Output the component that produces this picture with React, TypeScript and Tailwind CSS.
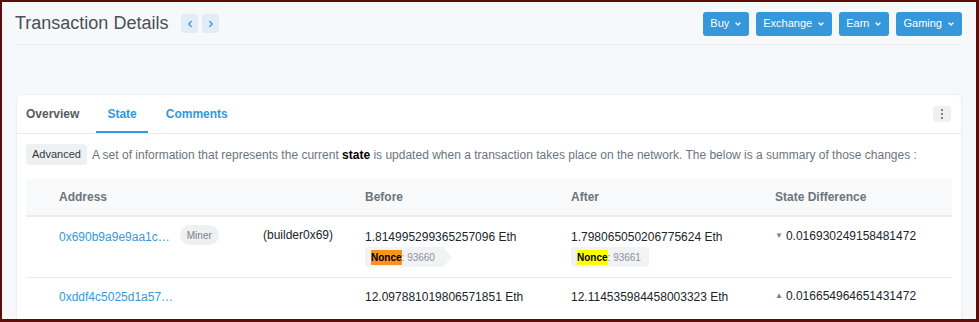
import { ChevronDown, ChevronLeft, ChevronRight } from "lucide-react";

function NavButton({ label }: { label: string }) {
  return (
    <button className="flex items-center gap-[5px] h-[24px] px-[7px] rounded-[3px] bg-[#3498db] text-white text-[11px]">
      {label}
      <ChevronDown className="w-[8px] h-[8px]" strokeWidth={4} />
    </button>
  );
}

function NonceBadge({ value, color, arrow }: { value: string; color: string; arrow?: boolean }) {
  return (
    <div className="flex mt-[1px]">
      <div className={`flex items-center h-[20px] pl-[6px] pr-[8px] bg-[#f1f3f5] text-[10px] ${arrow ? "rounded-l-[3px]" : "rounded-[4px]"}`}>
        <span className={`font-bold text-black ${color}`}>Nonce</span>
        <span className="text-[#8a9199]">: {value}</span>
      </div>
      {arrow && (
        <div className="w-0 h-0 border-y-[10px] border-y-transparent border-l-[9px] border-l-[#f1f3f5]" />
      )}
    </div>
  );
}

export default function App() {
  return (
    <div
      className="h-[322px] overflow-hidden border-[#5e0b0b] border-l-[2px] border-t-[2px] border-r-[3px] border-b-[3px] bg-[#f7f8fa]"
      style={{ fontFamily: '"Liberation Sans", Arial, sans-serif' }}
    >
      <div className="ml-[13px] mr-[14px] flex items-center justify-between h-[43px] pt-[1px] border-b border-[#e9ecef]">
        <div className="flex items-center">
          <h1 className="text-[18px] text-[#4a5057] mr-[13px]">Transaction Details</h1>
          <div className="flex gap-[4px]">
            <span className="w-[17px] h-[19px] rounded-[3px] bg-[#e1ecf8] flex items-center justify-center text-[#3498db]">
              <ChevronLeft className="w-[10px] h-[10px]" strokeWidth={3} />
            </span>
            <span className="w-[17px] h-[19px] rounded-[3px] bg-[#e1ecf8] flex items-center justify-center text-[#3498db]">
              <ChevronRight className="w-[10px] h-[10px]" strokeWidth={3} />
            </span>
          </div>
        </div>
        <div className="flex gap-[7px]">
          <NavButton label="Buy" />
          <NavButton label="Exchange" />
          <NavButton label="Earn" />
          <NavButton label="Gaming" />
        </div>
      </div>

      <div className="mt-[49px] ml-[14px] mr-[14px] bg-white rounded-t-[6px] border border-[#edf0f3] border-b-0 shadow-[0_1px_3px_rgba(0,0,0,0.03)]">
        <div className="flex items-center justify-between h-[39px] border-b border-[#e9ecef] pl-[9px] pr-[10px]">
          <div className="flex h-full text-[12px] font-bold">
            <span className="flex items-center text-[#555b61]">Overview</span>
            <span className="flex items-center text-[#3498db] ml-[17px] px-[11px] border-b-2 border-[#3498db] mt-[2px]">State</span>
            <span className="flex items-center text-[#3498db] ml-[18px]">Comments</span>
          </div>
          <span className="w-[18px] h-[16px] rounded-[3px] bg-[#eef0f2] flex flex-col items-center justify-center gap-[1.5px]">
            <span className="w-[2.5px] h-[2.5px] rounded-full bg-[#5a6068]" />
            <span className="w-[2.5px] h-[2.5px] rounded-full bg-[#5a6068]" />
            <span className="w-[2.5px] h-[2.5px] rounded-full bg-[#5a6068]" />
          </span>
        </div>

        <div className="px-[9px] pt-[10px]">
          <div className="flex items-center text-[12px] text-[#6c757d]">
            <span className="h-[21px] px-[6px] rounded-[4px] bg-[#eef0f2] text-[#343a40] text-[11px] flex items-center mr-[5px]">
              Advanced
            </span>
            <span>
              A set of information that represents the current <b className="text-black">state</b> is updated when a
              transaction takes place on the network. The below is a summary of those changes :
            </span>
          </div>

          <div className="mt-[14px] text-[12px]">
            <div className="flex h-[38px] items-center bg-[#f8f9fa] border-b-2 border-[#e9ecef] font-bold text-[#6c757d] pl-[33px]">
              <span className="w-[306px]">Address</span>
              <span className="w-[206px]">Before</span>
              <span className="w-[204px]">After</span>
              <span>State Difference</span>
            </div>

            <div className="flex h-[61px] border-b border-[#e9ecef] pl-[33px] pt-[11px] text-[#212529]">
              <div className="w-[306px] grid grid-cols-[204px_1fr] items-start">
                <div className="flex items-start">
                  <span className="text-[#3498db]">0x690b9a9e9aa1c…</span>
                  <span className="ml-[10px] -mt-[3px] h-[20px] px-[7px] rounded-full bg-[#eef0f2] text-[#7b828a] text-[10px] flex items-center">
                    Miner
                  </span>
                </div>
                <span className="-mt-[2px]">(builder0x69)</span>
              </div>
              <div className="w-[206px]">
                <div>1.814995299365257096 Eth</div>
                <NonceBadge value="93660" color="bg-[#f7941d]" arrow />
              </div>
              <div className="w-[204px]">
                <div>1.798065050206775624 Eth</div>
                <NonceBadge value="93661" color="bg-[#ffff00]" />
              </div>
              <div className="flex items-center h-[14px] mt-[1px]">
                <span className="text-[#7b828a] text-[8px] mr-[3px]">▼</span>
                0.016930249158481472
              </div>
            </div>

            <div className="flex h-[50px] pl-[33px] pt-[10px] text-[#212529]">
              <div className="w-[306px]">
                <span className="text-[#3498db]">0xddf4c5025d1a57…</span>
              </div>
              <div className="w-[206px]">12.097881019806571851 Eth</div>
              <div className="w-[204px]">12.114535984458003323 Eth</div>
              <div className="flex items-center h-[14px] mt-[1px]">
                <span className="text-[#7b828a] text-[8px] mr-[3px]">▲</span>
                0.016654964651431472
              </div>
            </div>
          </div>
        </div>
      </div>
    </div>
  );
}
